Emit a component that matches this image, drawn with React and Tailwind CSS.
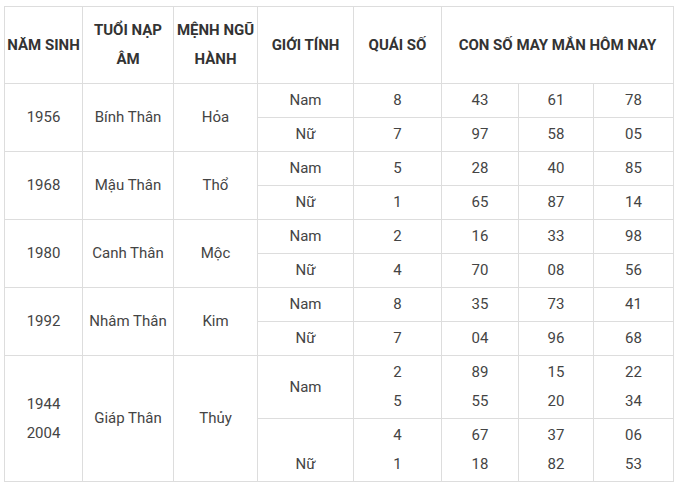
import React from 'react';

const groups = [
  { year: ['1956'], tuoi: 'Bính Thân', menh: 'Hỏa', rows: [
    { g: 'Nam', q: ['8'], n: [['43'], ['61'], ['78']] },
    { g: 'Nữ', q: ['7'], n: [['97'], ['58'], ['05']] },
  ] },
  { year: ['1968'], tuoi: 'Mậu Thân', menh: 'Thổ', rows: [
    { g: 'Nam', q: ['5'], n: [['28'], ['40'], ['85']] },
    { g: 'Nữ', q: ['1'], n: [['65'], ['87'], ['14']] },
  ] },
  { year: ['1980'], tuoi: 'Canh Thân', menh: 'Mộc', rows: [
    { g: 'Nam', q: ['2'], n: [['16'], ['33'], ['98']] },
    { g: 'Nữ', q: ['4'], n: [['70'], ['08'], ['56']] },
  ] },
  { year: ['1992'], tuoi: 'Nhâm Thân', menh: 'Kim', rows: [
    { g: 'Nam', q: ['8'], n: [['35'], ['73'], ['41']] },
    { g: 'Nữ', q: ['7'], n: [['04'], ['96'], ['68']] },
  ] },
  { year: ['1944', '2004'], tuoi: 'Giáp Thân', menh: 'Thủy', tall: true, rows: [
    { g: 'Nam', q: ['2', '5'], n: [['89', '55'], ['15', '20'], ['22', '34']] },
    { g: ['\u00a0', 'Nữ'], q: ['4', '1'], n: [['67', '18'], ['37', '82'], ['06', '53']] },
  ] },
];

const cell = 'border border-[#dddddd] text-center align-middle p-0';

const Lines = ({ items }) => (
  <>
    {(Array.isArray(items) ? items : [items]).map((t, i) => (
      <div key={i}>{t}</div>
    ))}
  </>
);

export default function App() {
  return (
    <div className="bg-white w-[680px] h-[486px] pt-[6px] pl-[4px]" style={{ fontFamily: 'Roboto, "Liberation Sans", sans-serif' }}>
      <table className="table-fixed border-collapse w-[669px] text-[15px] leading-[29px] text-[#444]">
        <colgroup>
          <col className="w-[78px]" />
          <col className="w-[91px]" />
          <col className="w-[84px]" />
          <col className="w-[96px]" />
          <col className="w-[88px]" />
          <col className="w-[77px]" />
          <col className="w-[75px]" />
          <col className="w-[80px]" />
        </colgroup>
        <thead>
          <tr className="h-[77px] font-bold text-[#333]">
            <th className={cell}>NĂM SINH</th>
            <th className={cell}>TUỔI NẠP<br />ÂM</th>
            <th className={cell}>MỆNH NGŨ<br />HÀNH</th>
            <th className={cell}>GIỚI TÍNH</th>
            <th className={cell}>QUÁI SỐ</th>
            <th className={cell} colSpan={3}>CON SỐ MAY MẮN HÔM NAY</th>
          </tr>
        </thead>
        <tbody>
          {groups.map((grp) =>
            grp.rows.map((r, i) => (
              <tr key={grp.tuoi + i} className={grp.tall ? 'h-[63px]' : 'h-[34px]'}>
                {i === 0 && (
                  <>
                    <td className={cell} rowSpan={2}><Lines items={grp.year} /></td>
                    <td className={cell} rowSpan={2}>{grp.tuoi}</td>
                    <td className={cell} rowSpan={2}>{grp.menh}</td>
                  </>
                )}
                <td className={cell}><Lines items={r.g} /></td>
                <td className={cell}><Lines items={r.q} /></td>
                {r.n.map((c, j) => (
                  <td key={j} className={cell}><Lines items={c} /></td>
                ))}
              </tr>
            ))
          )}
        </tbody>
      </table>
    </div>
  );
}
